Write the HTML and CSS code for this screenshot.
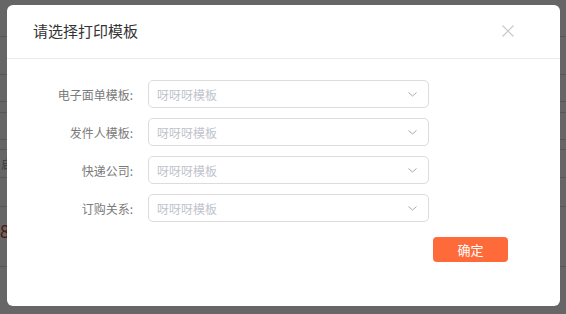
FILE: index.html
```html
<!DOCTYPE html>
<html lang="zh-CN">
<head>
	<meta charset="UTF-8" />
	<title>请选择打印模板</title>
	<link rel="stylesheet" href="styles.css">
</head>
<body>
	<div class="page">
		<div class="row" style="height:37px"></div>
		<div class="row" style="height:38px"></div>
		<div class="row" style="height:27px"></div>
		<div class="row" style="height:11px"></div>
		<div class="row" style="height:27px"></div>
		<div class="row" style="height:10px"></div>
		<div class="row cell-text" style="height:28px"><span>启</span></div>
		<div class="row" style="height:29px"></div>
		<div class="row cell-num" style="height:50px"><span>8</span></div>
		<div class="row cols" style="height:38px"><i></i><i></i></div>
	</div>
	<div class="mask"></div>
	<div class="dialog">
		<div class="dialogHead">
			<span class="title">请选择打印模板</span>
			<svg class="close" width="12" height="12" viewBox="0 0 12 12"><path d="M0.5 0.5L11.5 11.5M11.5 0.5L0.5 11.5" stroke="#c8c8c8" stroke-width="1.2" fill="none"/></svg>
		</div>
		<form class="dialogBody">
			<div class="line"><span class="label">电子面单模板:</span><div class="select"><span>呀呀呀模板</span><svg width="9" height="5" viewBox="0 0 9 5"><path d="M0.5 0.5L4.5 4L8.5 0.5" stroke="#a8a8a8" stroke-width="1" fill="none"/></svg></div></div>
			<div class="line"><span class="label">发件人模板:</span><div class="select"><span>呀呀呀模板</span><svg width="9" height="5" viewBox="0 0 9 5"><path d="M0.5 0.5L4.5 4L8.5 0.5" stroke="#a8a8a8" stroke-width="1" fill="none"/></svg></div></div>
			<div class="line"><span class="label">快递公司:</span><div class="select"><span>呀呀呀模板</span><svg width="9" height="5" viewBox="0 0 9 5"><path d="M0.5 0.5L4.5 4L8.5 0.5" stroke="#a8a8a8" stroke-width="1" fill="none"/></svg></div></div>
			<div class="line"><span class="label">订购关系:</span><div class="select"><span>呀呀呀模板</span><svg width="9" height="5" viewBox="0 0 9 5"><path d="M0.5 0.5L4.5 4L8.5 0.5" stroke="#a8a8a8" stroke-width="1" fill="none"/></svg></div></div>
			<div class="btnLine"><button type="button" class="confirm">确定</button></div>
		</form>
	</div>
</body>
</html>
```

FILE: styles.css
```css
* {
	box-sizing: border-box;
}
body, div, form, span, button {
	margin: 0;
	padding: 0;
}
body {
	width: 566px;
	height: 314px;
	overflow: hidden;
	position: relative;
	background-color: #fff;
	font-family: "Noto Sans CJK SC", "Liberation Sans", sans-serif;
}
.page {
	height: 314px;
}
.row {
	border-bottom: 1px solid #dadada;
	position: relative;
	font-size: 14px;
	color: #999;
}
.cell-text span {
	display: block;
	line-height: 28px;
	padding-left: 1px;
	font-size: 12px;
}
.cell-num span {
	display: block;
	line-height: 28px;
	margin-top: 10px;
	color: #c03a1a;
	font-size: 17px;
}
.cols {
	display: flex;
	border-bottom: none;
}
.cols i {
	width: 1px;
	height: 100%;
	background: #cfcfcf;
	margin-left: 300px;
}
.cols i + i {
	margin-left: 129px;
}
.mask {
	position: absolute;
	left: 0;
	top: 0;
	width: 100%;
	height: 100%;
	background-color: rgba(0, 0, 0, 0.6);
}
.dialog {
	position: absolute;
	left: 7px;
	top: 5px;
	width: 553px;
	height: 301px;
	background-color: #fff;
	border-radius: 6px;
}
.dialogHead {
	height: 54px;
	border-bottom: 1px solid #ebebeb;
	display: flex;
	align-items: center;
	justify-content: space-between;
	padding: 0 46px 2px 26px;
}
.title {
	font-size: 15px;
	color: #333;
}
.dialogBody {
	padding: 21px 0 0 0;
}
.line {
	display: flex;
	align-items: center;
	height: 28px;
	margin-bottom: 10px;
}
.label {
	width: 128px;
	padding-right: 2px;
	text-align: right;
	font-size: 12px;
	color: #7a7a7a;
}
.select {
	width: 281px;
	height: 28px;
	margin-left: 13px;
	border: 1px solid #dcdcdc;
	border-radius: 5px;
	display: flex;
	align-items: center;
	justify-content: space-between;
	padding: 0 11px 0 8px;
	font-size: 12px;
	color: #c0c4cc;
}
.select svg {
	margin-top: 1px;
}
.btnLine {
	display: flex;
	justify-content: flex-end;
	padding-right: 52px;
	margin-top: 15px;
}
.confirm {
	width: 75px;
	height: 25px;
	border: none;
	border-radius: 4px;
	background-color: #ff6a3a;
	color: #fff;
	font-size: 13px;
	font-family: "Noto Sans CJK SC", "Liberation Sans", sans-serif;
	cursor: pointer;
}
```
